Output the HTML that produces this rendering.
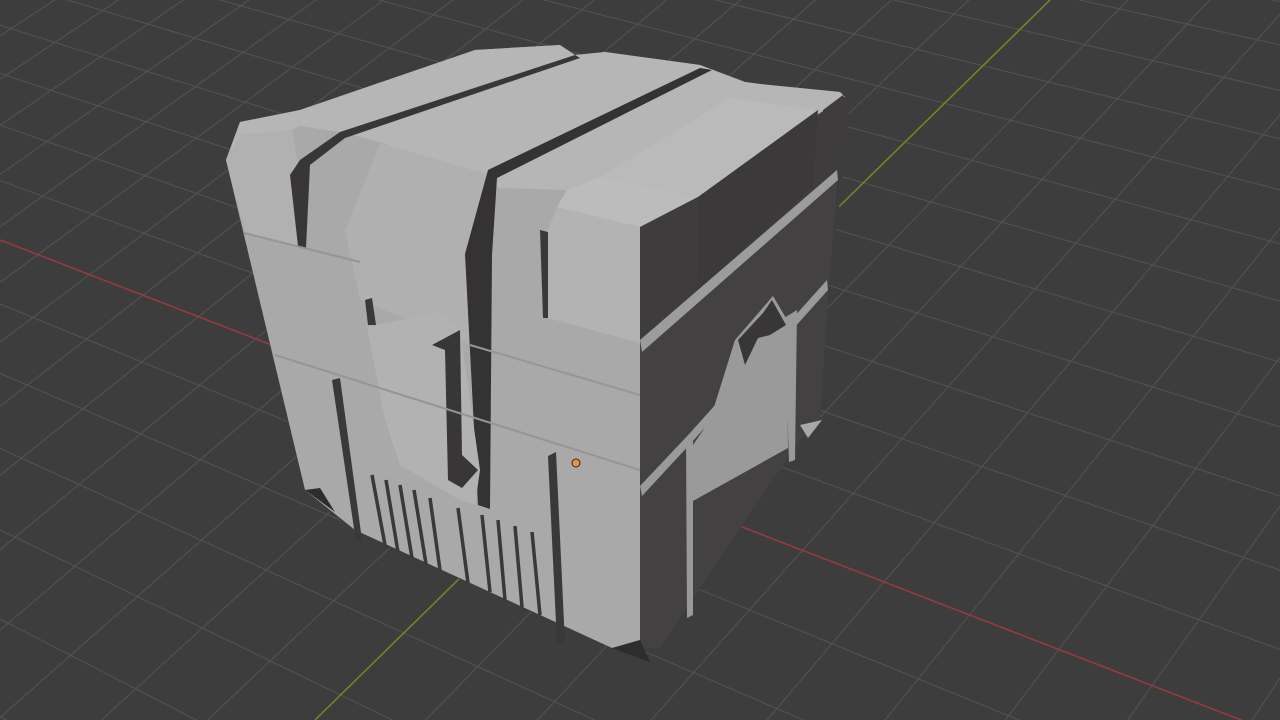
<!DOCTYPE html>
<html><head><meta charset="utf-8"><style>
html,body{margin:0;padding:0;background:#3d3d3d;overflow:hidden;width:1280px;height:720px}
svg{display:block}
</style></head><body>
<svg id="s" width="1280" height="720" viewBox="0 0 1280 720" xmlns="http://www.w3.org/2000/svg" style="overflow:hidden">
<rect width="1280" height="720" fill="#3d3d3d"/>
<g id="grid" stroke="#545454" stroke-width="1" fill="none"></g>
<line x1="0" y1="240" x2="1280" y2="735" stroke="#9a3a40" stroke-width="1.5"/>
<line x1="1050" y1="0" x2="315" y2="720" stroke="#6f8b25" stroke-width="1.5"/>
<g id="cube">
<polygon fill="#3e3c3c" points="226,160 240,122 300,110 475,50 560,45 575,55 605,52 700,65 745,82 760,84 840,92 850,103 840,200 828,300 820,420 800,440 660,648 640,652 612,648 355,532 330,512 305,492"/>
<polygon fill="#a9a9a9" points="226,160 240,122 300,110 475,50 560,45 575,55 605,52 700,65 745,82 760,84 840,92 845,97 820,113 698,197 640,227 640,645 612,648 355,530 305,490"/>
<polygon fill="#b6b6b6" points="240,122 300,110 475,50 560,45 575,55 605,52 700,65 745,82 760,84 840,92 845,97 820,113 698,197 640,227 600,205 567,190 500,188 380,142 340,132 300,126 226,160"/>
<polygon fill="#b1b1b1" points="226,160 240,135 292,130 300,175 306,248 245,232"/>
<polygon fill="#b0b0b0" points="345,230 380,143 490,175 465,252 470,345 360,300"/>
<polygon fill="#b3b3b3" points="543,243 557,207 640,222 640,343 548,318"/>
<polygon fill="#bcbcbc" points="557,207 567,190 600,177 697,197 640,227"/>
<polygon fill="#bababa" points="600,177 730,98 818,110 698,197"/>
<polygon fill="#3e3c3c" points="640,227 698,197 698,290 640,343"/>
<polygon fill="#434141" points="640,343 837,173 836,200 828,300 820,420 800,440 660,648 640,648"/>
<polygon fill="#3b3939" points="698,197 818,110 813,187 697,290"/>
<polygon fill="#3e3c3c" points="823,110 843,95 848,103 837,173 820,187"/>
<polygon fill="#9c9c9c" points="640,340 837,170 838,180 642,352"/>
<polygon fill="#9a9a9a" points="640,486 690,433 827,280 828,290 692,442 642,496"/>
<polygon fill="#999" points="686,440 693,436 693,615 687,618"/>
<polygon fill="#999" points="784,318 797,310 795,460 789,462"/>
<polygon fill="#9a9a9a" points="693,445 710,420 735,340 773,296 786,318 788,448 693,501"/>
<polygon fill="#383636" points="738,340 763,313 772,300 786,325 770,335 758,338 745,365"/>
<polygon fill="#a8a8a8" points="800,425 822,420 808,438"/>
<polygon fill="#343232" points="488,170 700,68 712,70 497,178 492,255 490,509 478,505 465,254"/>
<polygon fill="#383636" points="290,175 300,160 340,132 575,55 580,58 345,138 310,165 306,248 298,246"/>
<polygon fill="#3a3838" points="332,380 340,378 362,540 356,542"/>
<polygon fill="#3a3838" points="548,456 556,452 565,644 557,644"/>
<polygon fill="#3a3838" points="365,300 372,298 376,325 368,325"/>
<polygon fill="#3a3838" points="540,230 548,232 548,318 543,318"/>
<polygon fill="#b2b2b2" points="367,327 440,312 460,330 480,470 475,505 460,500 400,465 385,420"/>
<polygon fill="#383636" points="432,345 460,330 462,455 478,470 462,488 448,480 445,350"/>
<polyline fill="none" stroke="#959595" stroke-width="2" points="244,233 360,262"/>
<polyline fill="none" stroke="#959595" stroke-width="2" points="275,355 640,470"/>
<polyline fill="none" stroke="#969696" stroke-width="2" points="470,345 640,395"/>
<g stroke="#3a3838" stroke-width="3.5">
<line x1="372" y1="475" x2="385" y2="545"/>
<line x1="386" y1="480" x2="398" y2="552"/>
<line x1="400" y1="485" x2="412" y2="558"/>
<line x1="414" y1="490" x2="426" y2="564"/>
<line x1="430" y1="498" x2="440" y2="570"/>
<line x1="458" y1="508" x2="468" y2="583"/>
<line x1="482" y1="515" x2="490" y2="592"/>
<line x1="498" y1="520" x2="505" y2="600"/>
<line x1="515" y1="526" x2="522" y2="607"/>
<line x1="532" y1="532" x2="540" y2="615"/>
</g>
<polygon fill="#2e2c2c" points="305,490 320,488 335,512"/>
<polygon fill="#2e2c2c" points="612,648 640,640 650,662"/>
</g>
<circle cx="576" cy="463" r="4" fill="#e8953a" stroke="#2a2a2a" stroke-width="1"/>
</svg>
<script>
(function(){
var g=document.getElementById('grid'),ns='http://www.w3.org/2000/svg';
var O=[577,463],V1=[-2957,-903],V2=[3023,-1943];
function pt(V,c,k){var d=[V[0]-O[0],V[1]-O[1]],f=k*c/(1+k*c);return [O[0]+d[0]*f,O[1]+d[1]*f];}
function ln(V,p){var b=[V[0]+(p[0]-V[0])*4,V[1]+(p[1]-V[1])*4];
var l=document.createElementNS(ns,'line');l.setAttribute('x1',V[0]);l.setAttribute('y1',V[1]);l.setAttribute('x2',b[0]);l.setAttribute('y2',b[1]);g.appendChild(l);}
for(var k=-20;k<=60;k++){if(k==0)continue;if(1+k*0.022<=0.05)continue;ln(V1,pt(V2,0.022,k));}
for(var k=-25;k<=60;k++){if(k==0)continue;if(1+k*0.02<=0.05)continue;ln(V2,pt(V1,0.02,k));}
})();
</script>
</body></html>
